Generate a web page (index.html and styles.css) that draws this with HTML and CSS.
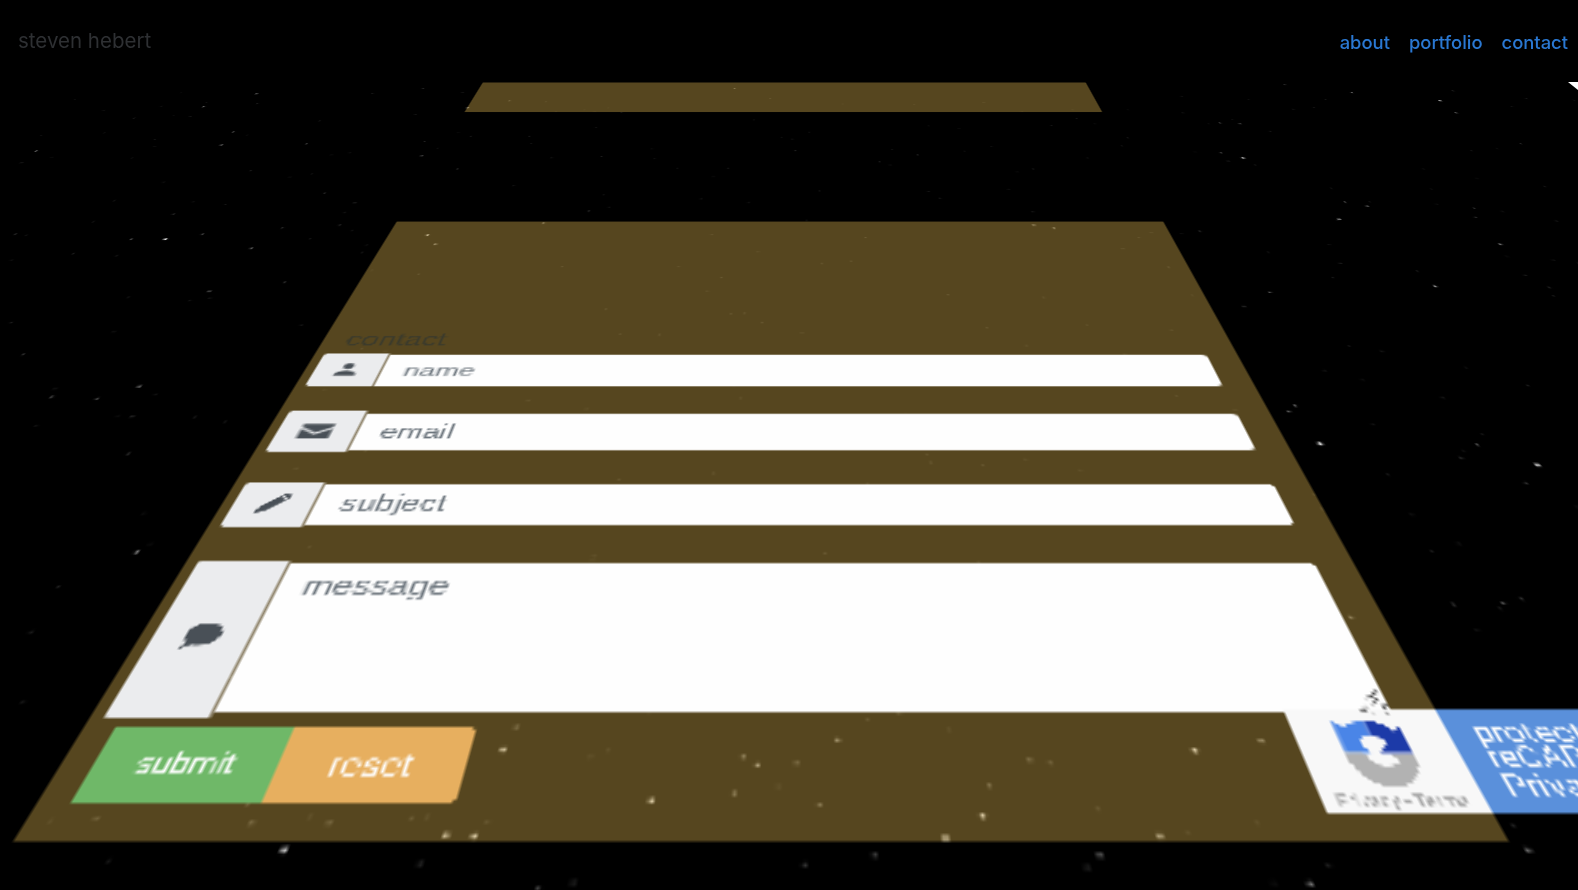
FILE: index.html
```html
<!DOCTYPE html>
<html lang="en">
<head>
<meta charset="utf-8">
<title>steven hebert</title>
<link rel="stylesheet" href="styles.css">
</head>
<body>
<div class="scene">
  <div class="plane">
    <div class="plane-inner">
    <svg class="stars" id="stars" viewBox="-700 -520 1400 800" xmlns="http://www.w3.org/2000/svg"></svg>
    <section class="panel panel-about"></section>
    <section class="panel panel-contact">
      <h2 class="contact-title">contact</h2>
      <form class="contact-form">
        <div class="group group-name">
          <span class="addon">
            <svg class="icon" viewBox="0 0 24 24"><path d="M12 12a5 5 0 1 0 0-10 5 5 0 0 0 0 10zm0 2c-4 0-10 2-10 6v2h20v-2c0-4-6-6-10-6z"/></svg>
          </span>
          <input class="field" type="text" placeholder="name">
        </div>
        <div class="group group-email">
          <span class="addon">
            <svg class="icon icon-lg" viewBox="0 0 24 24"><path d="M1 4h22v3l-11 6.500L1 7zM1 9.500l11 6.500 11-6.500V20H1z"/></svg>
          </span>
          <input class="field" type="text" placeholder="email">
        </div>
        <div class="group group-subject">
          <span class="addon">
            <svg class="icon icon-md" viewBox="0 0 24 24"><path d="M2 22l1.500-6L15 4.500l4.500 4.500L8 20.500zM16.500 3l1-1a2 2 0 0 1 2.800 0l1.700 1.700a2 2 0 0 1 0 2.800l-1 1z"/></svg>
          </span>
          <input class="field" type="text" placeholder="subject">
        </div>
        <div class="group group-message">
          <span class="addon">
            <svg class="icon icon-lg icon-bubble" viewBox="0 0 24 24"><path d="M13 3C7 3 3 6.500 3 11c0 2.300 1 4.300 2.800 5.800L3 22l6-3.300c1.200.3 2.600.3 4 .3 6 0 10-3.500 10-8s-4-8-10-8z"/></svg>
          </span>
          <textarea class="field field-area" placeholder="message"></textarea>
        </div>
        <div class="actions">
          <button class="btn btn-submit" type="button">submit</button>
          <button class="btn btn-reset" type="button">reset</button>
        </div>
      </form>
    </section>
    <aside class="badge">
      <div class="badge-logo">
        <svg class="badge-mark" viewBox="0 0 14 13"><path d="M1 11l6-7M4 12l6-7M7 4l4-3M10 12l2-6"/></svg>
        <svg class="badge-icon" viewBox="0 0 30 30">
          <path class="logo-light" d="M2 0l4 3q4-3 9-3v7q-4 0-6 3l3 5H2z"/>
          <path class="logo-dark" d="M15 0q7 0 10 5l4-3v13H16l4-5q-2-3-5-3z"/>
          <path class="logo-grey" d="M1 15h8q1 6 7 6 4 0 6-3l-3-2h10v1q-2 13-14 13Q3 30 1 15z"/>
        </svg>
        <span class="badge-links">Privacy - Terms</span>
      </div>
      <div class="badge-text">
        <span>protected by</span>
        <span>reCAPTCHA</span>
        <span>Privacy - Terms</span>
      </div>
    </aside>
    </div>
  </div>
</div>
<header class="topbar">
  <a class="brand" href="#">steven hebert</a>
  <nav class="nav">
    <a href="#">about</a>
    <a href="#">portfolio</a>
    <a href="#">contact</a>
  </nav>
</header>
<div class="corner"></div>
<script src="script.js"></script>
</body>
</html>
```
FILE: styles.css
```css
* { box-sizing: border-box; }
html, body { margin: 0; height: 100%; background: #000; overflow: hidden; }
body { font-family: "Liberation Sans", Arial, sans-serif; }

.scene {
  position: absolute;
  inset: 0;
  overflow: hidden;
  perspective: 1043px;
  perspective-origin: 800px 445px;
}
/* The tilted sheet is painted into its own surface at 0.7x and enlarged,
   which gives it the soft, low-resolution look of the original. */
.plane {
  width: 388.15px;
  margin: 82.1px 0 0 595.6px;
  transform-origin: 204.4px 363.58px;
  transform: translateZ(482px) rotateX(50deg) scale(1.42857);
  will-change: transform;
  opacity: .998;
}
.plane-inner {
  position: relative;
  width: 554.5px;
  zoom: .7;
}
.stars {
  position: absolute;
  left: -408px;
  top: 0;
  width: 1400px;
  height: 800px;
  overflow: visible;
}
.stars circle { fill: #fff; }

.panel { position: relative; background: rgba(240, 195, 88, .355); }
.panel-about { height: 69px; margin-bottom: 198px; }
.panel-contact { height: 480px; padding: 166px 18.5px 15px 5.5px; }

.contact-title {
  position: absolute;
  left: 14px;
  top: 142px;
  margin: 0;
  font-size: 19px;
  line-height: 21px;
  font-weight: 400;
  color: #3a3a2c;
}
.contact-form { display: flex; flex-direction: column; }

.group { display: flex; margin-bottom: 23px; }
.group-name { height: 33px; }
.group-email { height: 36px; }
.group-subject { height: 33.5px; }
.group-message { height: 88px; margin-bottom: 5px; }

.addon {
  flex: none;
  display: flex;
  align-items: center;
  justify-content: center;
  background: #ecedef;
  background-clip: padding-box;
  border-right: 2.5px solid rgba(255, 255, 255, .35);
  border-radius: 2px 0 0 2px;
}
.group-name .addon { width: 40.5px; }
.group-email .addon { width: 44.5px; }
.group-subject .addon { width: 42px; }
.group-message .addon { width: 44.3px; }

.icon { width: 15px; height: 15px; fill: #495057; }
.icon-md { width: 17px; height: 17px; }
.icon-lg { width: 19px; height: 19px; }
.icon-bubble { margin: 3px 2px 0 0; }

.field {
  flex: 1;
  min-width: 0;
  margin: 2px 0;
  border: 0;
  border-radius: 0 3px 3px 0;
  background: #fff;
  padding: 0 12.5px;
  font: 16.7px/1.2 "Liberation Sans", Arial, sans-serif;
  color: #495057;
  outline: 0;
  resize: none;
}
.group-name .field { margin: 1.5px 0 .5px; }
.field::placeholder { color: #6c757d; opacity: 1; }
.field-area { padding: 4px 11.5px 0; }

.actions { display: flex; margin-left: 7.2px; }
.btn {
  height: 34px;
  border: 0;
  padding: 0;
  color: #fff;
  font-family: "Liberation Sans", Arial, sans-serif;
}
.btn-submit { width: 72.8px; background: #6fb968; font-size: 13px; }
.btn-reset { width: 73.9px; background: #e8b05f; border-radius: 0 3px 3px 0; font-size: 15px; }

.badge {
  position: absolute;
  left: 491px;
  top: 688.6px;
  display: flex;
  width: 264px;
  height: 47px;
  font-family: Roboto, "Liberation Sans", sans-serif;
}
.badge-logo {
  position: relative;
  flex: none;
  width: 63.500px;
  background: #f9f9f9;
  display: flex;
  flex-direction: column;
  align-items: center;
  padding-top: 5px;
}
.badge-mark {
  position: absolute;
  left: 32px;
  top: -9.5px;
  width: 14px;
  height: 13px;
  fill: none;
  stroke: #4a4a4a;
  stroke-width: 1.6;
  stroke-dasharray: 1.2 .9;
}
.badge-icon { width: 33px; height: 30px; }
.logo-light { fill: #4a86e8; }
.logo-dark { fill: #1c3aa9; }
.logo-grey { fill: #b3b3b3; }
.badge-links {
  margin-top: 3px;
  font-size: 7.5px;
  line-height: 8px;
  color: #a9a9a9;
}
.badge-text {
  flex: 1;
  display: flex;
  flex-direction: column;
  justify-content: center;
  padding-left: 10px;
  background: #5a91dc;
  color: #fff;
  font-size: 14px;
  line-height: 12px;
  white-space: nowrap;
}

.topbar {
  position: relative;
  display: flex;
  justify-content: space-between;
  align-items: flex-start;
  padding: 29px 10px 0 18px;
  font-family: Inter, "Liberation Sans", sans-serif;
}
.topbar a { text-decoration: none; }
.brand { font-size: 20.5px; line-height: 24px; color: #2e3033; }
.nav { display: flex; gap: 19px; padding-top: 1px; }
.nav a { font-size: 18.4px; line-height: 24px; font-weight: 500; color: #2a78d2; }

.corner {
  position: absolute;
  left: 1568px;
  top: 82px;
  width: 10px;
  height: 8px;
  background: #fff;
  clip-path: polygon(0 0, 100% 0, 100% 100%);
}
```
FILE: script.js
```js
// Star field: bright stars are given where they appear on screen and are
// mapped back onto the tilted plane; faint ones come from a seeded generator.
var bright = [
  [428,234,.8],[436,243,.7],[257,93,.6],[204,106,.5],[423,88,.3],[234,131,.5],[222,144,.7],[37,150,.6],[22,162,.3],
  [307,143,.4],[422,155,.5],[458,168,.3],[325,192,.3],[166,238,1.3],[203,233,.4],[132,238,.4],[252,247,.6],[174,213,.3],
  [16,233,.3],[283,227,.3],[355,202,.3],[210,290,.5],[285,281,.3],[340,224,.3],[468,107,.9],[510,100,.5],[735,88,.4],
  [984,102,.3],[1034,224,.6],[1054,227,.6],[544,222,.5],[589,210,.3],[918,154,.25],[880,161,.25],
  [1339,218,.8],[1367,205,.5],[1345,201,.4],[1500,243,.7],[1435,285,.7],[1270,291,.4],[1244,305,.3],[1474,207,.3],
  [1475,216,.3],[1200,230,.3],[1549,286,.3],[1295,404,.5],[1320,442,1.2],[1477,443,.4],[1537,463,1.2],[1461,456,.3],
  [1340,262,.25],[1352,92,.7],[1440,100,1.2],[1456,112,.5],[1240,123,.5],[1220,122,.4],[1243,157,1.2],[1221,152,.4],
  [1285,84,.3],[1453,90,.3],[1228,160,.25],[1521,143,.25],[1289,410,.4],[1525,481,.3],[1503,601,.35],[1453,602,.3],[1521,597,.25],
  [1351,615,.4],[504,747,1],[517,724,.4],[652,798,.9],[838,737,.6],[744,754,.5],[758,762,.6],[735,790,.5],[820,802,.35],
  [946,835,1.1],[797,760,.35],[805,861,.3],[875,852,.35],[539,885,.3],[574,879,.3],[1195,748,1],[1261,738,.6],[983,813,.8],
  [1030,757,.4],[1050,760,.3],[990,783,.35],[1160,833,.7],[1100,852,.6],[1087,864,.3],[447,832,.9],[475,833,.9],[285,847,1],
  [421,860,.3],[97,816,.3],[330,820,.35],[253,820,.35],[1528,847,.5],[1310,880,.6],[140,385,.6],[53,395,.4],[98,397,.4],
  [24,353,.3],[133,415,.3],[129,452,.3],[138,550,.6]
];
var svg = document.getElementById('stars');
var NS = 'http://www.w3.org/2000/svg';

function addStar(x, y, size) {
  var c = document.createElementNS(NS, 'circle');
  c.setAttribute('cx', x.toFixed(1));
  c.setAttribute('cy', y.toFixed(1));
  c.setAttribute('r', (0.5 + size * 0.62).toFixed(2));
  c.setAttribute('opacity', Math.min(1, size + 0.2).toFixed(2));
  svg.appendChild(c);
}

bright.forEach(function (s) {
  var d = s[1] + 430;
  addStar((s[0] - 800) * 470.7 / d, 732.4 - 640900 / d, s[2]);
});

var seed = 20177;
function rnd() {
  seed = (seed * 16807) % 2147483647;
  return seed / 2147483647;
}
for (var i = 0; i < 420; i++) {
  addStar(rnd() * 1400 - 700, rnd() * 780 - 500, 0.06 + rnd() * 0.1);
}
```
